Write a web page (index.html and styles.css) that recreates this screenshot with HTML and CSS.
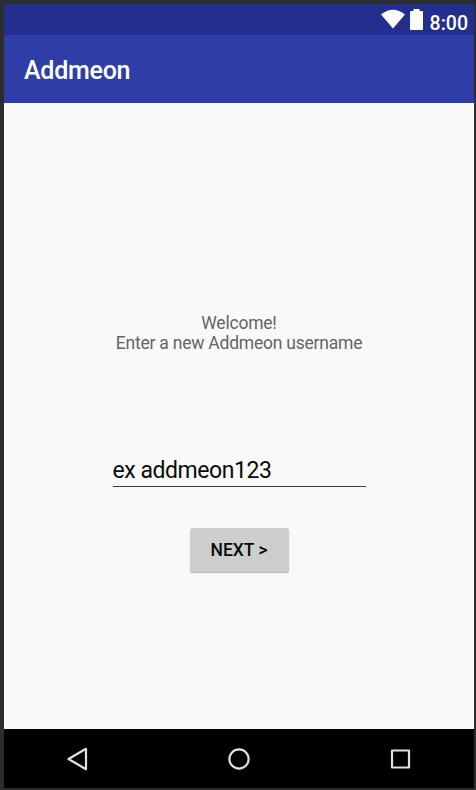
FILE: index.html
```html
<!DOCTYPE html>
<html lang="en">
<head>
<meta charset="utf-8">
<title>Addmeon</title>
<link rel="stylesheet" href="styles.css">
</head>
<body>
<div class="screen">
  <div class="status-bar">
    <svg class="wifi" width="26" height="20" viewBox="0 0 26 20"><path d="M1 5.500Q13-4 25 5.500L13 19.500Z"/></svg>
    <svg class="battery" width="13" height="21" viewBox="0 0 13 21"><path d="M3.500 0h6v2H12q1 0 1 1V20q0 1-1 1H1q-1 0-1-1V3q0-1 1-1h2.500z"/></svg>
    <span class="clock">8:00</span>
  </div>
  <header class="app-bar"><h1 class="title">Addmeon</h1></header>
  <main class="content">
    <p class="welcome">Welcome!<br>Enter a new Addmeon username</p>
    <input class="username" type="text" value="ex addmeon123" aria-label="Username">
    <button class="next" type="button">NEXT &gt;</button>
  </main>
  <nav class="nav-bar">
    <svg class="nav-icon" width="26" height="26" viewBox="0 0 26 26"><path d="M3.500 13L21 2.800V23.200Z"/></svg>
    <svg class="nav-icon" width="26" height="26" viewBox="0 0 26 26"><circle cx="13" cy="13" r="9.600"/></svg>
    <svg class="nav-icon" width="26" height="26" viewBox="0 0 26 26"><rect x="5" y="4.500" width="17" height="17"/></svg>
  </nav>
</div>
</body>
</html>
```
FILE: styles.css
```css
* {
  box-sizing: border-box;
}

body {
  margin: 0;
  height: 790px;
  padding: 4px 2px 2px 4px;
  background: #2b2d2f;
  font-family: Roboto, sans-serif;
  overflow: hidden;
}

.screen {
  display: flex;
  flex-direction: column;
  height: 784px;
}

.status-bar {
  display: flex;
  justify-content: flex-end;
  align-items: flex-start;
  height: 31px;
  padding: 5px 6px 0 0;
  background: #232e8f;
  color: #fff;
  fill: #fff;
}

.battery {
  margin: 0 7px 0 4px;
}

.clock {
  margin-top: 3px;
  font-size: 19.500px;
  line-height: 23px;
  font-weight: 500;
}

.app-bar {
  display: flex;
  align-items: center;
  height: 68px;
  padding: 3px 20px 0;
  background: #2f3da8;
  color: #fff;
}

.title {
  margin: 0;
  font-size: 25px;
  font-weight: 500;
  letter-spacing: -0.250px;
}

.content {
  display: flex;
  flex: 1;
  flex-direction: column;
  align-items: center;
  padding-top: 210px;
  background: #f9f9f9;
}

.welcome {
  margin: 0;
  color: #656565;
  font-size: 17.500px;
  letter-spacing: -0.220px;
  line-height: 20px;
  text-align: center;
}

.username {
  width: 253px;
  height: 36px;
  margin: 98px 0 41px;
  padding: 4px 0 0;
  border: 0;
  border-bottom: 1px solid #3c3c3c;
  background: transparent;
  color: #0a0a0a;
  font: 23px/31px Roboto, sans-serif;
  letter-spacing: -0.450px;
  outline: 0;
}

.next {
  width: 99px;
  height: 44px;
  padding: 0;
  border: 0;
  border-radius: 2.500px;
  background: #cdcfce;
  box-shadow: 0 1px 1px #aeb2b2;
  color: #0a0a0a;
  font: 500 17.500px/44px Roboto, sans-serif;
}

.nav-bar {
  display: flex;
  justify-content: space-between;
  align-items: center;
  height: 59px;
  padding: 0 61px;
  background: #000;
}

.nav-icon {
  fill: none;
  stroke: #e2e2e2;
  stroke-width: 2.200;
  stroke-linejoin: round;
}
```
